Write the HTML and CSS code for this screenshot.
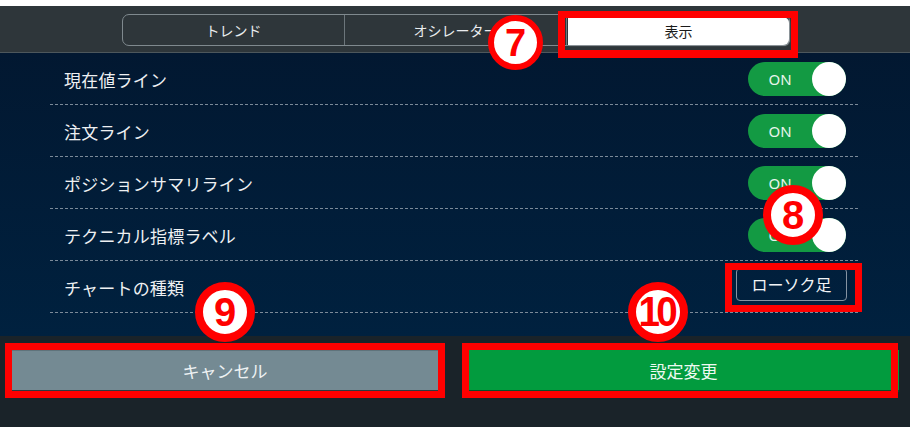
FILE: index.html
```html
<!DOCTYPE html>
<html lang="ja">
<head>
<meta charset="utf-8">
<title>チャート設定</title>
<link rel="stylesheet" href="styles.css">
</head>
<body>
<div class="page">
  <div class="topgap"></div>
  <header class="header">
    <div class="segmented">
      <div class="seg">トレンド</div>
      <div class="seg">オシレーター</div>
      <div class="seg seg-active">表示</div>
    </div>
  </header>

  <main class="content">
    <div class="list">
      <div class="row">
        <span class="label">現在値ライン</span>
        <div class="toggle"><span class="toggle-text">ON</span><span class="knob"></span></div>
      </div>
      <div class="row">
        <span class="label">注文ライン</span>
        <div class="toggle"><span class="toggle-text">ON</span><span class="knob"></span></div>
      </div>
      <div class="row">
        <span class="label">ポジションサマリライン</span>
        <div class="toggle"><span class="toggle-text">ON</span><span class="knob"></span></div>
      </div>
      <div class="row">
        <span class="label">テクニカル指標ラベル</span>
        <div class="toggle"><span class="toggle-text">ON</span><span class="knob"></span></div>
      </div>
      <div class="row">
        <span class="label">チャートの種類</span>
        <button class="chip">ローソク足</button>
      </div>
    </div>
  </main>

  <footer class="footer">
    <button class="btn btn-cancel">キャンセル</button>
    <button class="btn btn-apply">設定変更</button>
  </footer>

  <!-- callout frames and numbered markers -->
  <div class="frame frame-tab"></div>
  <div class="frame frame-chip"></div>
  <div class="frame frame-cancel"></div>
  <div class="frame frame-apply"></div>

  <div class="marker marker-sm m7"><span>7</span></div>
  <div class="marker m8"><span>8</span></div>
  <div class="marker m9"><span>9</span></div>
  <div class="marker m10"><span class="ten">10</span></div>
</div>
</body>
</html>
```

FILE: styles.css
```css
* { box-sizing: border-box; }

html, body {
  margin: 0;
  padding: 0;
  background: #ffffff;
}

.page {
  position: relative;
  width: 910px;
  height: 427px;
  overflow: hidden;
  font-family: "Noto Sans CJK JP", "Noto Sans", sans-serif;
}

.topgap {
  height: 6px;
  background: #ffffff;
}

/* header with segmented tabs */
.header {
  height: 47px;
  background: #2e363a;
  border-bottom: 1px solid #4d575c;
  padding: 8px 0 0 122px;
}

.segmented {
  display: flex;
  width: 668px;
  height: 32px;
  border: 1px solid #7f898e;
  border-radius: 7px;
}

.seg {
  flex: 1;
  display: flex;
  align-items: center;
  justify-content: center;
  color: #e9ecee;
  font-size: 14px;
  border-right: 1px solid #6c767b;
}

.seg:last-child { border-right: none; }

.seg-active {
  margin: 2px 0 0 1px;
  height: 28px;
  background: #ffffff;
  color: #1a1a1a;
  border-radius: 0 6px 6px 0;
  box-shadow: 1px 1px 1px #8d9599;
}

/* settings list */
.content {
  height: 283px;
  background: linear-gradient(#021831, #00213f);
  padding: 0 51px 0 50px;
}

.row {
  height: 52px;
  display: flex;
  align-items: center;
  justify-content: space-between;
  padding: 0 13px 0 14px;
  background-image: linear-gradient(to right, #7b8a99 60%, transparent 60%);
  background-size: 5px 1px;
  background-repeat: repeat-x;
  background-position: left bottom;
}

.label {
  color: #eef0f2;
  font-size: 17px;
  letter-spacing: 0.2px;
}

.toggle {
  position: relative;
  width: 98px;
  height: 34px;
  border-radius: 17px;
  background: #139a43;
  display: flex;
  align-items: center;
}

.toggle-text {
  width: 64px;
  text-align: center;
  color: #e8f5ec;
  font-family: "Noto Sans", sans-serif;
  font-size: 15px;
}

.knob {
  position: absolute;
  right: 0;
  top: 0;
  width: 34px;
  height: 34px;
  border-radius: 50%;
  background: #ffffff;
}

.chip {
  width: 111px;
  height: 33px;
  margin-top: -6px;
  margin-right: -1px;
  background: transparent;
  border: 1px solid #8593a2;
  border-radius: 4px;
  color: #f2f4f6;
  font-family: "Noto Sans CJK JP", sans-serif;
  font-size: 16px;
  padding: 0;
}

/* footer buttons */
.footer {
  height: 91px;
  background: #1a2329;
  display: flex;
  padding: 14px 11px 0 12px;
  gap: 30px;
  align-items: flex-start;
}

.btn {
  height: 42px;
  border: none;
  font-family: "Noto Sans CJK JP", sans-serif;
  font-size: 17px;
  padding: 0;
}

.btn-cancel {
  width: 426px;
  background: #748a93;
  color: #eef2f3;
  border-top: 1px solid #5f737b;
  border-bottom: 2px solid #2b3a40;
}

.btn-apply {
  width: 431px;
  background: #029b3e;
  color: #eefaf2;
  border-bottom: 2px solid #05512a;
}

/* callout frames */
.frame {
  position: absolute;
  border: 7px solid #ff0000;
}

.frame-tab { left: 558px; top: 11px; width: 240px; height: 47px; border-bottom-width: 8px; }
.frame-chip { left: 725px; top: 263px; width: 137px; height: 49px; }
.frame-cancel { left: 5px; top: 343px; width: 440px; height: 55px; }
.frame-apply { left: 462px; top: 343px; width: 436px; height: 55px; }

/* numbered markers */
.marker {
  position: absolute;
  width: 60px;
  height: 60px;
  border-radius: 50%;
  background: #ffffff;
  border: 8px solid #ff0000;
  display: flex;
  align-items: center;
  justify-content: center;
  color: #ff0000;
  font-family: "Liberation Sans", Arial, sans-serif;
  font-weight: bold;
  font-size: 40px;
  line-height: 1;
}

.marker-sm {
  width: 55px;
  height: 55px;
  border-width: 6px;
  font-size: 38px;
}

.m7 { left: 488px; top: 15px; }
.m8 { left: 763px; top: 185px; }
.m9 { left: 195px; top: 282px; }
.m10 { left: 628px; top: 282px; }

.ten {
  display: inline-block;
  font-size: 42px;
  letter-spacing: -4px;
  transform: scaleX(0.92);
  margin-left: -3px;
}
```
